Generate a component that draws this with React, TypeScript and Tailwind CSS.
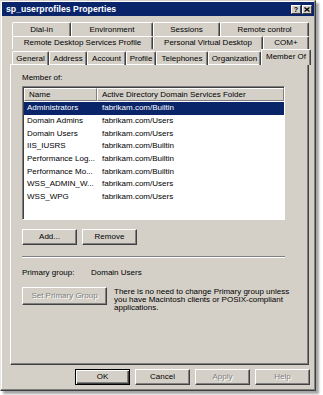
import React from 'react';

const tabRow1 = [
  { label: 'Dial-in', w: 59 },
  { label: 'Environment', w: 82 },
  { label: 'Sessions', w: 67 },
  { label: 'Remote control', w: 89 },
];

const tabRow2 = [
  { label: 'Remote Desktop Services Profile', w: 141 },
  { label: 'Personal Virtual Desktop', w: 110 },
  { label: 'COM+', w: 46 },
];

const tabRow3 = [
  { label: 'General', w: 37 },
  { label: 'Address', w: 38 },
  { label: 'Account', w: 39 },
  { label: 'Profile', w: 30 },
  { label: 'Telephones', w: 52 },
  { label: 'Organization', w: 53 },
];

const groups = [
  ['Administrators', 'fabrikam.com/Builtin'],
  ['Domain Admins', 'fabrikam.com/Users'],
  ['Domain Users', 'fabrikam.com/Users'],
  ['IIS_IUSRS', 'fabrikam.com/Builtin'],
  ['Performance Log...', 'fabrikam.com/Builtin'],
  ['Performance Mo...', 'fabrikam.com/Builtin'],
  ['WSS_ADMIN_W...', 'fabrikam.com/Users'],
  ['WSS_WPG', 'fabrikam.com/Users'],
];

function Tab({ label, w, h = 'h-[14px]' }: { label: string; w: number; h?: string }) {
  return (
    <div
      className={`${h} flex items-center justify-center rounded-t-[2px] border-l border-t border-r border-l-white border-t-white border-r-[#404040] shadow-[inset_-1px_0_0_#808080] text-[8px] leading-none text-black whitespace-nowrap`}
      style={{ width: w }}
    >
      {label}
    </div>
  );
}

function Button({ children, disabled, primary, className = '' }: { children: React.ReactNode; disabled?: boolean; primary?: boolean; className?: string }) {
  return (
    <div
      className={`flex items-center justify-center border bg-[#d4d0c8] text-[8px] leading-none whitespace-nowrap ${
        primary
          ? 'border-black shadow-[inset_1px_1px_0_#ffffff,inset_-1px_-1px_0_#404040,inset_-2px_-2px_0_#808080]'
          : 'border-l-white border-t-white border-r-[#404040] border-b-[#404040] shadow-[inset_-1px_-1px_0_#808080]'
      } ${disabled ? 'text-[#808080] [text-shadow:1px_1px_0_#ffffff]' : 'text-black'} ${className}`}
    >
      {children}
    </div>
  );
}

export default function App() {
  return (
    <div className="w-[323px] h-[395px] bg-white [font-family:'Liberation_Sans',Arial,sans-serif]">
      <div className="w-[316px] h-[391px] bg-[#d4d0c8] border border-l-[#e8e6e2] border-t-[#d4d0c8] border-r-[#404040] border-b-[#404040] shadow-[inset_-1px_-1px_0_#808080,inset_1px_1px_0_#ffffff,3px_3px_2px_rgba(0,0,0,0.35)] flex flex-col px-[1px] pt-[1px]">
        {/* title bar */}
        <div className="h-[14px] bg-[#0a246a] flex items-center justify-between pl-[4px] pr-[2px]">
          <span className="text-white font-bold text-[8.7px] leading-none">sp_userprofiles Properties</span>
          <div className="flex gap-[1px]">
            <div className="w-[10px] h-[9px] bg-[#d4d0c8] border border-l-white border-t-white border-r-[#404040] border-b-[#404040] flex items-center justify-center text-[7px] font-bold leading-none text-black">?</div>
            <div className="w-[10px] h-[9px] bg-[#d4d0c8] border border-l-white border-t-white border-r-[#404040] border-b-[#404040] flex items-center justify-center">
              <svg width="6" height="5" viewBox="0 0 6 5">
                <path d="M0.5 0.5 L5.5 4.5 M5.5 0.5 L0.5 4.5" stroke="#000" strokeWidth="1.3" />
              </svg>
            </div>
          </div>
        </div>

        {/* tabs */}
        <div className="pt-[6px] pl-[10px] flex flex-col">
          <div className="flex">
            {tabRow1.map((t) => (
              <Tab key={t.label} {...t} />
            ))}
          </div>
          <div className="flex">
            {tabRow2.map((t) => (
              <Tab key={t.label} {...t} h="h-[13px]" />
            ))}
          </div>
          <div className="flex items-end -mb-[1px] relative z-10">
            {tabRow3.map((t) => (
              <Tab key={t.label} {...t} />
            ))}
            <div className="w-[50px] h-[16px] bg-[#d4d0c8] flex items-start pt-[3px] justify-center rounded-t-[2px] border-l border-t border-r border-l-white border-t-white border-r-[#404040] shadow-[inset_-1px_0_0_#808080] text-[8px] leading-none text-black whitespace-nowrap">
              Member Of
            </div>
          </div>
        </div>

        {/* panel */}
        <div className="ml-[8px] w-[299px] h-[301px] border border-l-white border-t-white border-r-[#404040] border-b-[#404040] shadow-[inset_-1px_-1px_0_#808080] pt-[9px] pl-[11px] flex flex-col text-[8px] leading-none text-black">
          <div className="h-[9px]">Member of:</div>

          {/* list view */}
          <div className="mt-[3px] w-[263px] h-[134px] bg-white border border-l-[#808080] border-t-[#808080] border-r-white border-b-white shadow-[inset_1px_1px_0_#404040] pl-[1px] pt-[1px] flex flex-col">
            <div className="flex h-[13px] w-[260px]">
              <div className="w-[73px] h-full flex items-center pl-[4px] bg-[#d4d0c8] border border-l-white border-t-white border-r-[#808080] border-b-[#808080]">Name</div>
              <div className="flex-1 h-full flex items-center pl-[4px] bg-[#d4d0c8] border border-l-white border-t-white border-r-[#808080] border-b-[#808080] whitespace-nowrap">
                Active Directory Domain Services Folder
              </div>
            </div>
            <div className="flex flex-col pt-[1px]">
              {groups.map(([name, folder], i) => (
                <div
                  key={name}
                  className={`flex h-[12.7px] items-center w-[260px] ${i === 0 ? 'bg-[#0a246a] text-white' : 'text-black'}`}
                >
                  <span className="w-[73px] pl-[3px] whitespace-nowrap">{name}</span>
                  <span className="pl-[5px] whitespace-nowrap">{folder}</span>
                </div>
              ))}
            </div>
          </div>

          {/* add/remove */}
          <div className="mt-[9px] flex gap-[5px]">
            <Button className="w-[55px] h-[16px]">Add...</Button>
            <Button className="w-[55px] h-[16px]">Remove</Button>
          </div>

          <div className="mt-[11px] w-[263px] h-[2px] border-t border-t-[#808080] border-b border-b-white" />

          <div className="mt-[11px] flex h-[9px]">
            <span className="w-[69px]">Primary group:</span>
            <span>Domain Users</span>
          </div>

          <div className="mt-[9px] flex">
            <Button disabled className="w-[85px] h-[18px]">Set Primary Group</Button>
            <p className="ml-[7px] pt-[1px] w-[178px] text-[8px] leading-[8px]">
              There is no need to change Primary group unless you have Macintosh clients or POSIX-compliant applications.
            </p>
          </div>
        </div>

        {/* dialog buttons */}
        <div className="mt-[4px] flex gap-[5px] justify-end pr-[4px]">
          <Button primary className="w-[55px] h-[16px]">OK</Button>
          <Button className="w-[55px] h-[16px]">Cancel</Button>
          <Button disabled className="w-[55px] h-[16px]">Apply</Button>
          <Button disabled className="w-[55px] h-[16px]">Help</Button>
        </div>
      </div>
    </div>
  );
}
